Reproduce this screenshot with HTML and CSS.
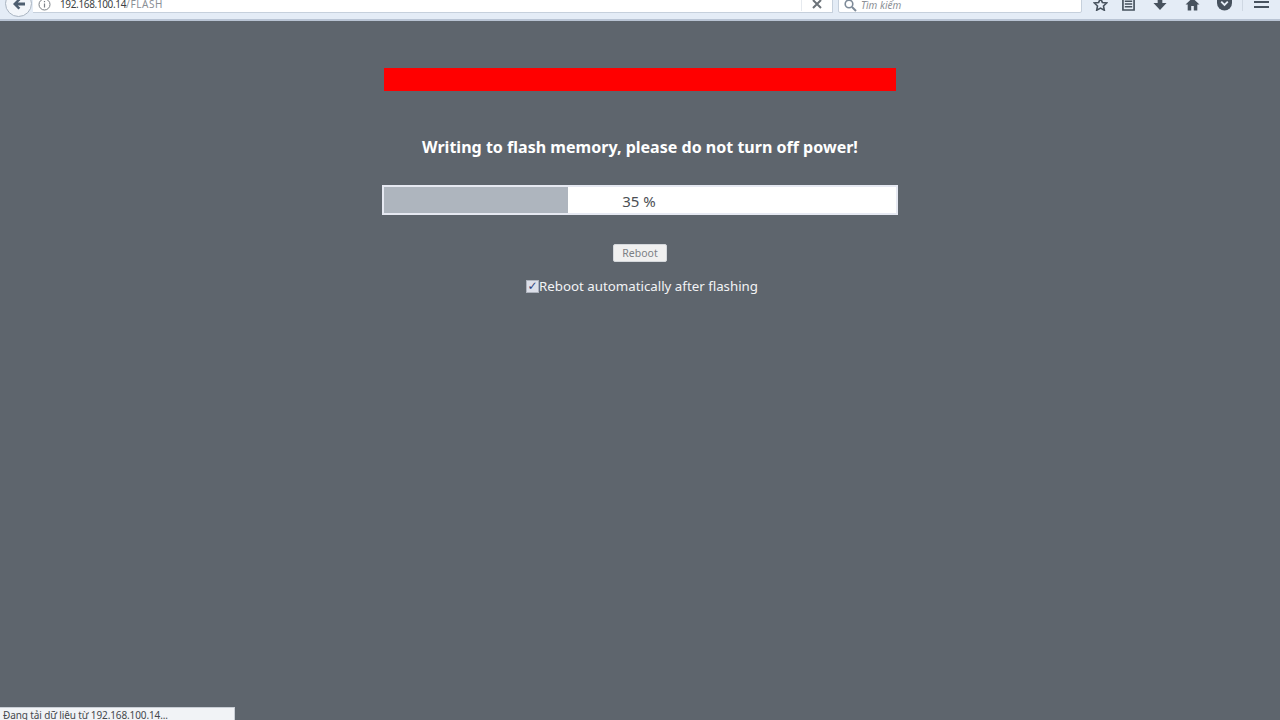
FILE: index.html
```html
<!DOCTYPE html>
<html lang="en">
<head>
    <meta charset="UTF-8">
    <title>FLASH</title>
    <link rel="stylesheet" href="styles.css">
</head>
<body>
    <header class="toolbar">
        <div class="back-btn">
            <svg width="14" height="12" viewBox="0 0 14 12"><path d="M6.500 0.500L1 6l5.500 5.500 1.800-1.800L5.800 7.500H13v-3H5.800l2.500-2.200z" fill="#4f5f70"/></svg>
        </div>
        <div class="url-bar">
            <svg class="info-icon" width="13" height="13" viewBox="0 0 13 13"><circle cx="6.500" cy="6.500" r="5.500" fill="none" stroke="#7a7f86"/><path d="M6.500 5.500v4M6.500 3v1.300" stroke="#7a7f86" stroke-width="1.200"/></svg>
            <span class="url-host">192.168.100.14</span><span class="url-path">/FLASH</span>
            <div class="url-stop">
                <svg width="10" height="10" viewBox="0 0 10 10"><path d="M1 1l8 8M9 1l-8 8" stroke="#6b7278" stroke-width="2"/></svg>
            </div>
        </div>
        <div class="search-bar">
            <svg width="13" height="13" viewBox="0 0 13 13"><circle cx="5" cy="5" r="3.800" fill="none" stroke="#7d8a98" stroke-width="1.600"/><path d="M8 8l4 4" stroke="#7d8a98" stroke-width="2"/></svg>
            <span>Tìm kiếm</span>
        </div>
        <div class="tool-icons">
            <div class="tool-slot star-slot">
                <svg width="15" height="14" viewBox="0 0 16 15"><path d="M8 1.500l2 4.300 4.600.6-3.400 3.200.9 4.600L8 11.900l-4.100 2.300.9-4.600L1.400 6.400 6 5.800z" fill="none" stroke="#47525e" stroke-width="1.700"/></svg>
            </div>
            <div class="tool-slot">
                <svg width="13" height="14" viewBox="0 0 14 15"><path d="M1 1h12v13H1z" fill="#e6eef7" stroke="#47525e" stroke-width="1.800"/><path d="M3 4.500h8M3 7.500h8M3 10.500h8" stroke="#47525e" stroke-width="1.500"/></svg>
            </div>
            <div class="tool-slot">
                <svg width="14" height="14" viewBox="0 0 15 14"><path d="M5 0h5v6h4.500L7.500 13.500 0.500 6H5z" fill="#47525e"/></svg>
            </div>
            <div class="tool-slot">
                <svg width="15" height="14" viewBox="0 0 15 14"><path d="M7.500 1L0.500 7.500h2.200V13.500h3.500V9h2.600v4.500h3.500V7.500h2.200z" fill="#47525e"/></svg>
            </div>
            <div class="tool-slot">
                <svg width="15" height="14" viewBox="0 0 16 14"><path d="M1 0h14a1 1 0 0 1 1 1v5a8 8 0 0 1-16 0V1a1 1 0 0 1 1-1z" fill="#47525e"/><path d="M4.500 4.500L8 8l3.500-3.500" fill="none" stroke="#e6eef7" stroke-width="2"/></svg>
            </div>
            <div class="tool-sep"></div>
            <div class="menu-icon"><span></span><span></span></div>
        </div>
    </header>

    <main class="page">
        <div class="red-bar"></div>
        <h1>Writing to flash memory, please do not turn off power!</h1>
        <div class="progress">
            <div class="progress-fill" style="width: 36%"></div>
            <span class="progress-text">35 %</span>
        </div>
        <button class="reboot-btn">Reboot</button>
        <label class="auto-reboot"><input type="checkbox" checked>Reboot automatically after flashing</label>
    </main>

    <div class="status-popup">Đang tải dữ liệu từ 192.168.100.14...</div>
</body>
</html>
```

FILE: styles.css
```css
html, body {
    height: 100%;
}

body {
    margin: 0;
    background: #5e656d;
    color: #fff;
    font-family: "Noto Sans", "DejaVu Sans", sans-serif;
    overflow: hidden;
}

/* browser toolbar, cut off by the top of the screenshot */
.toolbar {
    height: 19px;
    display: flex;
    align-items: flex-end;
    background: #e4ecf6;
    border-bottom: 2px solid #b9c4d4;
}

.back-btn {
    width: 27px;
    height: 27px;
    margin: 0 0 2px 5px;
    flex-shrink: 0;
    display: flex;
    align-items: center;
    justify-content: center;
    background: #f3f6fa;
    border: 1px solid #a9b4c1;
    border-radius: 50%;
    box-sizing: border-box;
}

.url-bar {
    width: 800px;
    height: 30px;
    margin-bottom: 6px;
    margin-left: 1px;
    padding: 0 0 1px 5px;
    flex-shrink: 0;
    display: flex;
    align-items: flex-end;
    background: #fff;
    border: 1px solid #c6d0dc;
    border-left: none;
    box-sizing: border-box;
    font-size: 10px;
    line-height: 14px;
}

.info-icon {
    margin-right: 9px;
    flex-shrink: 0;
}

.url-host {
    color: #3c3f44;
    letter-spacing: -0.35px;
}

.url-path {
    color: #8a8f95;
    letter-spacing: 0.6px;
}

.url-stop {
    width: 30px;
    height: 14px;
    margin-left: auto;
    display: flex;
    align-items: center;
    justify-content: center;
    border-left: 1px solid #e6eaef;
}

.search-bar {
    width: 244px;
    height: 30px;
    margin: 0 0 6px 5px;
    padding: 0 0 0 5px;
    flex-shrink: 0;
    display: flex;
    align-items: flex-end;
    gap: 4px;
    background: #fff;
    border: 1px solid #c6d0dc;
    border-radius: 2px;
    box-sizing: border-box;
    color: #8b9096;
    font-size: 10px;
    font-style: italic;
    line-height: 14px;
}

.tool-icons {
    flex: 1;
    display: flex;
    align-items: center;
    margin-bottom: 8px;
    padding-left: 2px;
}

.tool-slot {
    width: 32px;
    flex-shrink: 0;
    display: flex;
    justify-content: center;
}

.star-slot {
    margin-right: -4px;
}

.tool-sep {
    width: 1px;
    height: 14px;
    margin-left: 2px;
    background: #cfd8e3;
}

.menu-icon {
    width: 15px;
    margin-left: 11px;
    display: flex;
    flex-direction: column;
    gap: 3px;
}

.menu-icon span {
    height: 2px;
    background: #47525e;
}

/* flash page */
.page {
    width: 516px;
    margin: 0 auto;
    display: flex;
    flex-direction: column;
    align-items: center;
}

.red-bar {
    width: 512px;
    height: 23px;
    margin-top: 47px;
    background: #ff0000;
}

h1 {
    margin: 45px 0 0;
    font-size: 16.05px;
    line-height: 22px;
    font-weight: 700;
    white-space: nowrap;
}

.progress {
    position: relative;
    width: 100%;
    height: 30px;
    margin-top: 27px;
    background: #fff;
    border: 2px solid #e6e9f2;
    box-sizing: border-box;
}

.progress-fill {
    height: 100%;
    background: #aeb5be;
}

.progress-text {
    position: absolute;
    inset: 0;
    padding-right: 2px;
    text-align: center;
    color: #4c4f54;
    font-size: 15px;
    line-height: 28px;
}

.reboot-btn {
    width: 54px;
    height: 18px;
    margin-top: 29px;
    padding: 0;
    background: #f0f0f0;
    border: 1px solid #d5d8dc;
    border-radius: 2px;
    color: #7b7f84;
    font-family: inherit;
    font-size: 10.5px;
}

.auto-reboot {
    margin-top: 14px;
    margin-left: 4px;
    display: flex;
    align-items: center;
    color: #f2f3f5;
    font-size: 13.3px;
    line-height: 20px;
}

.auto-reboot input {
    appearance: none;
    width: 13px;
    height: 13px;
    margin: 0;
    display: flex;
    align-items: center;
    justify-content: center;
    background: #dcdfe9;
    border: 1px solid #aeb3bd;
    box-sizing: border-box;
}

.auto-reboot input:checked::before {
    content: "✓";
    color: #2f3f7a;
    font: 700 12px/11px "DejaVu Sans", sans-serif;
}

.status-popup {
    position: absolute;
    left: 0;
    bottom: 0;
    width: 235px;
    height: 13px;
    padding-left: 3px;
    background: #f1f3f6;
    border-top: 1px solid #c9ced5;
    border-right: 1px solid #c9ced5;
    box-sizing: border-box;
    color: #44484d;
    font-size: 10px;
    letter-spacing: -0.12px;
    line-height: 14px;
    overflow: hidden;
}
```
